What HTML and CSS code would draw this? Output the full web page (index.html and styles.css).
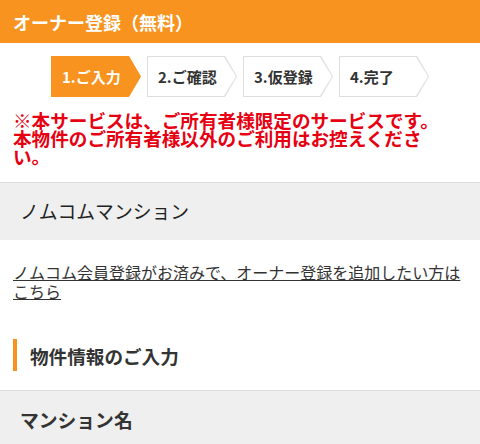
FILE: index.html
```html
<!DOCTYPE html>
<html lang="ja">
<head>
    <meta charset="UTF-8">
    <meta name="viewport" content="width=device-width, initial-scale=1.0">
    <title>オーナー登録（無料）</title>
    <link rel="stylesheet" href="styles.css">
</head>
<body>
    <header class="entete">
        <h1>オーナー登録（無料）</h1>
    </header>

    <ol class="etapes">
        <li class="etape active"><span>1.ご入力</span></li>
        <li class="etape"><span>2.ご確認</span></li>
        <li class="etape"><span>3.仮登録</span></li>
        <li class="etape"><span>4.完了</span></li>
    </ol>

    <p class="avertissement">※本サービスは、ご所有者様限定のサービスです。本物件のご所有者様以外のご利用はお控えください。</p>

    <div class="bloc-gris">
        <p class="nom-bien">ノムコムマンション</p>
    </div>

    <p class="lien-membre"><a href="#">ノムコム会員登録がお済みで、オーナー登録を追加したい方はこちら</a></p>

    <h2 class="titre-section">物件情報のご入力</h2>

    <div class="bloc-gris">
        <h3 class="titre-champ">マンション名</h3>
    </div>
</body>
</html>
```

FILE: styles.css
```css
/* Page d'inscription propriétaire */
body {
    margin: 0;
    padding: 0;
    background-color: #ffffff;
    color: #333333;
    font-family: "Noto Sans CJK JP", "Noto Sans", sans-serif;
}

.entete {
    background-color: #f7931e;
    height: 43px;
    display: flex;
    align-items: center;
    padding: 0 13px;
}

.entete h1 {
    margin: 0;
    color: #ffffff;
    font-size: 18px;
    font-weight: bold;
    line-height: 1;
}

.etapes {
    list-style: none;
    margin: 13px 0 0;
    padding: 0;
    display: flex;
    justify-content: center;
    gap: 6px;
}

.etape {
    width: 90px;
    height: 41px;
    padding: 1px;
    box-sizing: border-box;
    background-color: #dddddd;
    clip-path: polygon(0 0, calc(100% - 12px) 0, 100% 50%, calc(100% - 12px) 100%, 0 100%);
}

.etape span {
    display: flex;
    align-items: center;
    height: 100%;
    padding-left: 10px;
    background-color: #ffffff;
    clip-path: polygon(0 0, calc(100% - 12px) 0, 100% 50%, calc(100% - 12px) 100%, 0 100%);
    font-size: 15px;
    font-weight: bold;
    color: #333333;
}

.etape.active {
    background-color: #f7931e;
}

.etape.active span {
    background-color: #f7931e;
    color: #ffffff;
}

.avertissement {
    margin: 14px 0 0;
    padding: 0 26px 0 13px;
    color: #e60012;
    font-size: 18.6px;
    font-weight: bold;
    line-height: 18px;
}

.bloc-gris {
    margin-top: 17px;
    background-color: #efefef;
    border-top: 1px solid #dddddd;
    height: 57px;
    display: flex;
    align-items: center;
    padding: 0 20px;
}

.nom-bien {
    margin: 0;
    font-size: 18.8px;
    line-height: 1;
    color: #222222;
}

.lien-membre {
    margin: 23px 0 0;
    padding: 0 13px;
    font-size: 16px;
    line-height: 19px;
}

.lien-membre a {
    color: #333333;
    text-decoration: underline;
}

.titre-section {
    margin: 38px 13px 0;
    height: 32px;
    display: flex;
    align-items: center;
    padding-left: 13px;
    border-left: 4px solid #f7931e;
    font-size: 18.6px;
    font-weight: bold;
    color: #333333;
}

.bloc-gris:last-child {
    margin-top: 19px;
}

.titre-champ {
    margin: 0;
    font-size: 18.8px;
    font-weight: bold;
    color: #333333;
}
```
